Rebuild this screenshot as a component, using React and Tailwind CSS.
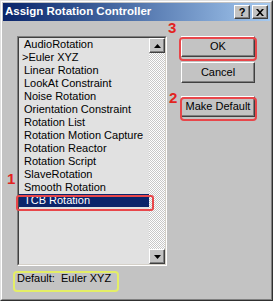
const items = [
  'AudioRotation',
  '>Euler XYZ',
  'Linear Rotation',
  'LookAt Constraint',
  'Noise Rotation',
  'Orientation Constraint',
  'Rotation List',
  'Rotation Motion Capture',
  'Rotation Reactor',
  'Rotation Script',
  'SlaveRotation',
  'Smooth Rotation',
  'TCB Rotation',
]

const raised =
  'border border-t-white border-l-white border-r-[#404040] border-b-[#404040] shadow-[inset_-1px_-1px_#808080]'

const WinButton = ({ children, className = '' }) => (
  <div
    className={`w-[74px] h-[21px] bg-[#c3c3c3] ${raised} flex items-center justify-center text-[11px] text-black ${className}`}
  >
    {children}
  </div>
)

const Arrow = ({ up }) => (
  <div className={`w-[16px] h-[15px] bg-[#c3c3c3] ${raised} flex items-center justify-center`}>
    <svg width="7" height="4" viewBox="0 0 7 4">
      <path d={up ? 'M3.5 0 L7 4 L0 4 Z' : 'M0 0 L7 0 L3.5 4 Z'} fill="#000" />
    </svg>
  </div>
)

const Listbox = () => (
  <div className="w-[150px] h-[230px] border border-t-[#808080] border-l-[#808080] border-r-white border-b-white">
    <div className="h-full flex border border-t-[#404040] border-l-[#404040] border-r-[#d4d0c8] border-b-[#d4d0c8] bg-[#e1e1e1]">
      <div className="flex-1 flex flex-col">
        {items.map((item) => {
          const selected = item === 'TCB Rotation'
          return (
            <div
              key={item}
              className={`h-[13px] leading-[13px] text-[11px] whitespace-nowrap ${
                item.startsWith('>') ? 'pl-[3px]' : 'pl-[5px]'
              } ${selected ? 'bg-[#0a246a] text-white' : 'text-black'}`}
            >
              {item}
            </div>
          )
        })}
      </div>
      <div className="w-[16px] flex flex-col">
        <Arrow up />
        <div className="flex-1 bg-[repeating-conic-gradient(#ffffff_0_25%,#c8c8c8_0_50%)] bg-[length:2px_2px]" />
        <Arrow />
      </div>
    </div>
  </div>
)

const Mark = ({ children, className }) => (
  <div className={`absolute text-[15px] leading-none font-bold text-[#e2231f] ${className}`}>{children}</div>
)

export default function App() {
  return (
    <div
      className="relative w-[273px] h-[301px] bg-[#c3c3c3] border border-t-[#e0e0e0] border-l-[#e0e0e0] border-r-[#303030] border-b-[#303030]"
      style={{ fontFamily: '"Liberation Sans", Arial, sans-serif' }}
    >
      <div className="h-full p-px border border-t-white border-l-white border-r-[#808080] border-b-[#808080]">
        {/* Title bar */}
        <div className="h-[18px] flex items-center justify-between pl-[2px] pr-[2px] bg-gradient-to-r from-[#0a246a] to-[#a6caf0]">
          <span className="text-white font-bold text-[11.5px] whitespace-nowrap">Assign Rotation Controller</span>
          <div className="flex gap-[2px]">
            <div className={`w-[16px] h-[14px] bg-[#c3c3c3] ${raised} flex items-center justify-center text-[11px] font-bold leading-none`}>
              ?
            </div>
            <div className={`w-[16px] h-[14px] bg-[#c3c3c3] ${raised} flex items-center justify-center`}>
              <svg width="8" height="7" viewBox="0 0 8 7">
                <path d="M0 0h2l2 2.3L6 0h2L5 3.5 8 7H6L4 4.7 2 7H0l3-3.5z" fill="#000" />
              </svg>
            </div>
          </div>
        </div>

        {/* Body */}
        <div className="flex pl-[14px] pt-[15px]">
          <div className="flex flex-col">
            <Listbox />
            <div className="mt-[6px] text-[11px] leading-[13px] text-black whitespace-nowrap">Default:&nbsp; Euler XYZ</div>
          </div>
          <div className="ml-[14px] flex flex-col">
            <WinButton>OK</WinButton>
            <WinButton className="mt-[5px]">Cancel</WinButton>
            <WinButton className="mt-[13px]">Make Default</WinButton>
          </div>
        </div>
      </div>

      {/* Annotations */}
      <div className="absolute left-[178px] top-[36px] w-[78px] h-[24px] border-2 border-[#e8464a] rounded-[4px]" />
      <div className="absolute left-[179px] top-[96px] w-[77px] h-[24px] border-2 border-[#e8464a] rounded-[4px]" />
      <div className="absolute left-[15px] top-[194px] w-[138px] h-[16px] border-2 border-[#e8464a] rounded-[3px]" />
      <div className="absolute left-[12px] top-[270px] w-[106px] h-[21px] border-2 border-[#e4ee66] rounded-[4px]" />
      <Mark className="left-[167px] top-[19px]">3</Mark>
      <Mark className="left-[168px] top-[89px]">2</Mark>
      <Mark className="left-[6px] top-[170px]">1</Mark>
    </div>
  )
}
